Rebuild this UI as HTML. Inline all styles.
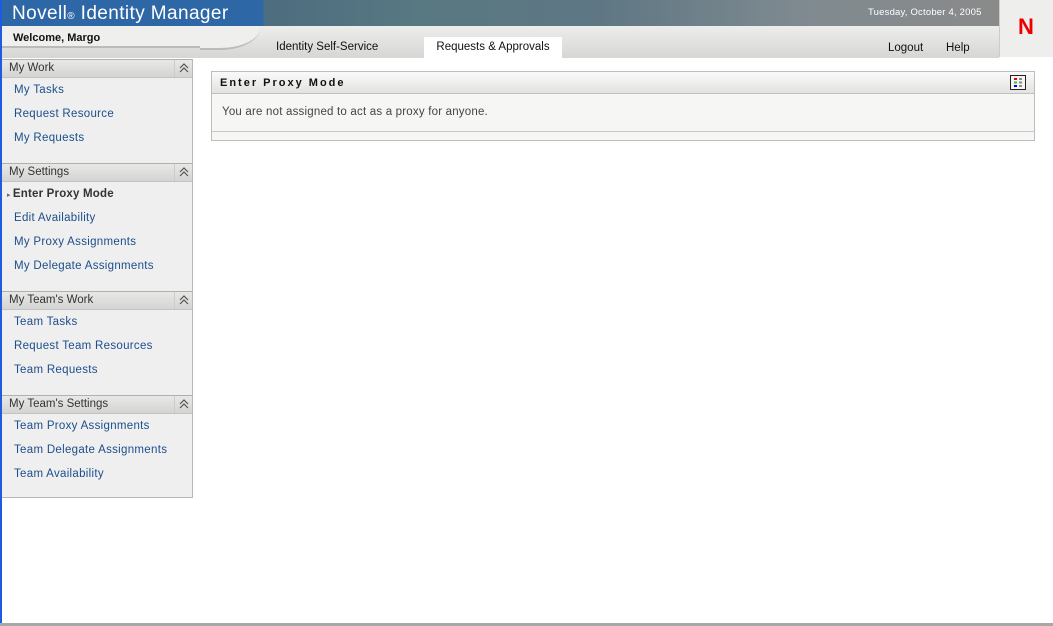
<!DOCTYPE html>
<html><head><meta charset="utf-8"><style>
*{margin:0;padding:0;box-sizing:border-box}
body{width:1053px;height:626px;position:relative;background:#fff;font-family:"Liberation Sans",sans-serif;overflow:hidden}
.lb{position:absolute;left:0;top:0;width:2px;height:626px;background:#1f5be0}
.bot{position:absolute;left:0;top:623px;width:1053px;height:3px;background:#a8a8a8}
.top{position:absolute;left:2px;top:0;width:997px;height:26px;background:linear-gradient(90deg,#2e67a6 0,#2e67a6 261px,#4d6d80 262px,#587882 420px,#5f7784 600px,#7f8a90 800px,#8a8a8a 997px)}
.title{position:absolute;left:10px;top:3px;color:#fff;font-size:19px;letter-spacing:.4px}
.title small{font-size:10px}
.date{position:absolute;left:866px;top:7px;color:#fff;font-size:9.5px;letter-spacing:.2px}
.logo{position:absolute;left:999px;top:0;width:54px;height:57px;background:#eeeeec;border-left:1px solid #ccc}
.logo span{position:absolute;left:18px;top:14px;color:#e00;font-weight:bold;font-size:22px}
.band{position:absolute;left:2px;top:26px;width:997px;height:32px;background:linear-gradient(#ededeb,#d6d6d4)}
.welcome{position:absolute;left:2px;top:26px;width:230px;height:22px;background:#efefed;border-bottom:2px solid #bbb}
.welcome b{position:absolute;left:11px;top:6px;font-size:11px;color:#111}
.curve{position:absolute;left:200px;top:26px;width:60px;height:24px;background:#efefed;border-bottom-right-radius:40px 22px;border-bottom:2px solid #bbb}
.tab1{position:absolute;left:276px;top:41px;font-size:11.5px;color:#111}
.tab2{position:absolute;left:424px;top:37px;width:138px;height:21px;background:#fff;font-size:11.5px;color:#111;text-align:center;padding-top:4px}
.lo{position:absolute;left:888px;top:42px;font-size:11.5px;color:#111}
.hp{position:absolute;left:946px;top:42px;font-size:11.5px;color:#111}
.side{position:absolute;left:2px;top:59px;width:191px;height:439px;background:#efefef;border-right:1px solid #b8b8b8;border-bottom:1px solid #b8b8b8}
.hd{height:19px;background:linear-gradient(#e8e8e6,#d4d4d2);border-top:1px solid #b0b0b0;border-bottom:1px solid #c4c4c4;font-size:11.5px;color:#333;padding:2px 0 0 7px;position:relative}
.hd i{position:absolute;right:0;top:0;width:18px;height:17px;border-left:1px solid #ccc}
.hd i svg{position:absolute;left:4px;top:3px}
.it{height:24px;line-height:24px;font-size:11.5px;color:#1b4e8c;padding-left:12px;letter-spacing:.3px}
.it.cur{font-weight:bold;color:#333;letter-spacing:.2px}
.sec{padding-bottom:14px}
.panel{position:absolute;left:211px;top:71px;width:824px;height:70px;border:1px solid #bdbdbd;background:#f6f6f4}
.ph{height:22px;background:linear-gradient(#fafafa,#e2e2e0);border-bottom:1px solid #c0c0c0;font-weight:bold;font-size:11px;letter-spacing:2px;padding:5px 0 0 8px;color:#111;position:relative}
.ic{position:absolute;right:8px;top:3px;width:16px;height:15px;border:1px solid #222;background:#f4f4f4}
.pb{height:38px;border-bottom:1px solid #c8c8c8;font-size:11.5px;color:#444;padding:12px 0 0 10px;letter-spacing:.2px}
</style></head><body>
<div class="top"><div class="title">Novell<small>®</small> Identity Manager</div><div class="date">Tuesday, October 4, 2005</div></div>
<div class="logo"><span>N</span></div>
<div class="band"></div>
<div class="welcome"><b>Welcome, Margo</b></div>
<div class="curve"></div>
<div class="tab1">Identity Self-Service</div>
<div class="tab2">Requests &amp; Approvals</div>
<div class="lo">Logout</div><div class="hp">Help</div>
<div class="side">
<div class="sec"><div class="hd">My Work<i><svg width="10" height="10" viewBox="0 0 10 10"><path d="M1 5L5 1L9 5M1 9L5 5L9 9" fill="none" stroke="#555" stroke-width="1.2"/></svg></i></div><div class="it">My Tasks</div><div class="it">Request Resource</div><div class="it">My Requests</div></div>
<div class="sec"><div class="hd" style="margin-top:-1px">My Settings<i><svg width="10" height="10" viewBox="0 0 10 10"><path d="M1 5L5 1L9 5M1 9L5 5L9 9" fill="none" stroke="#555" stroke-width="1.2"/></svg></i></div><div class="it cur" style="padding-left:5px"><span style="font-size:7px;color:#666;font-weight:normal">▸ </span>Enter Proxy Mode</div><div class="it">Edit Availability</div><div class="it">My Proxy Assignments</div><div class="it">My Delegate Assignments</div></div>
<div class="sec"><div class="hd" style="margin-top:-1px">My Team's Work<i><svg width="10" height="10" viewBox="0 0 10 10"><path d="M1 5L5 1L9 5M1 9L5 5L9 9" fill="none" stroke="#555" stroke-width="1.2"/></svg></i></div><div class="it">Team Tasks</div><div class="it">Request Team Resources</div><div class="it">Team Requests</div></div>
<div class="sec"><div class="hd" style="margin-top:-1px">My Team's Settings<i><svg width="10" height="10" viewBox="0 0 10 10"><path d="M1 5L5 1L9 5M1 9L5 5L9 9" fill="none" stroke="#555" stroke-width="1.2"/></svg></i></div><div class="it">Team Proxy Assignments</div><div class="it">Team Delegate Assignments</div><div class="it">Team Availability</div></div>
</div>
<div class="panel"><div class="ph">Enter Proxy Mode<div class="ic"><svg width="14" height="13" viewBox="0 0 14 13"><rect x="3" y="2" width="3" height="2" fill="#e00"/><rect x="3" y="5.5" width="3" height="2" fill="#2c2"/><rect x="3" y="9" width="3" height="2" fill="#00e"/><rect x="8" y="2" width="3" height="2" fill="#888"/><rect x="8" y="5.5" width="3" height="2" fill="#888"/><rect x="8" y="9" width="3" height="2" fill="#888"/></svg></div></div><div class="pb">You are not assigned to act as a proxy for anyone.</div></div>
<div class="lb"></div><div class="bot"></div>
</body></html>
